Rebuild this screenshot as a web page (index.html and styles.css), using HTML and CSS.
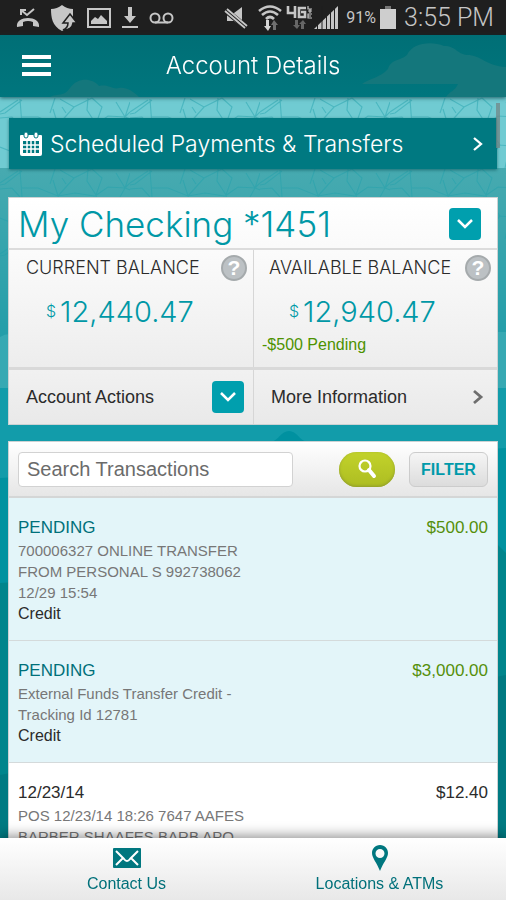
FILE: index.html
```html
<!DOCTYPE html>
<html lang="en">
<head>
<meta charset="utf-8">
<meta name="viewport" content="width=device-width, initial-scale=1">
<title>Account Details</title>
<link rel="stylesheet" href="styles.css">
</head>
<body>
<div class="app">
  <div class="status">
    <div class="status-group status-left">
      <svg width="24" height="20" viewBox="0 0 24 20"><path d="M1 19c-2-12 24-12 22 0l-6-1v-4q-5-2-10 0v4z" fill="#c6c6c6"/><path d="M5 7V2h5M5 2l6 5 7-6" fill="none" stroke="#c6c6c6" stroke-width="2"/></svg>
      <svg width="27" height="26" viewBox="0 0 27 26"><path d="M12 0q5 4 11 4v9l-4 10-7 3C2 21 1 12 1 4q6 0 11-4z" fill="#c6c6c6"/><path d="M20 9l7 9h-4q-1 7-10 7 5-2 5-7h-5z" fill="#c6c6c6" stroke="#1f1f1f" stroke-width="1.500"/></svg>
      <svg width="24" height="20" viewBox="0 0 24 20"><path d="M1 1h22v18H1z" fill="none" stroke="#c6c6c6" stroke-width="2"/><path d="M4 16v-3l4-4 3 2 3-4 4 4 2 2v3z" fill="#c6c6c6"/></svg>
      <svg width="18" height="22" viewBox="0 0 18 22"><path d="M7 0h4v9h4l-6 7-6-7h4z" fill="#c6c6c6"/><path d="M1 20h16" stroke="#c6c6c6" stroke-width="2"/></svg>
      <svg width="25" height="12" viewBox="0 0 25 12"><g fill="none" stroke="#c6c6c6" stroke-width="2"><circle cx="6" cy="6" r="4.500"/><circle cx="19" cy="6" r="4.500"/><path d="M6 10.500h13"/></g></svg>
    </div>
    <div class="status-group status-right">
      <svg class="mute" width="23" height="22" viewBox="0 0 23 22"><path d="M2 6h7l8-6v20l-8-6H2z" fill="#c6c6c6"/><path d="M-1 2l23 19" stroke="#1f1f1f" stroke-width="6"/><path d="M0 4l20 17M2 2l20 17" stroke="#c6c6c6" stroke-width="1.800"/></svg>
      <svg width="24" height="26" viewBox="0 0 24 26"><g fill="none" stroke="#c6c6c6" stroke-width="2.600"><path d="M1 6q11-9 22 0M4 10q8-7 16 0M8 14q4-4 8 0"/></g><path d="M8 15h3v6h2l-3 5-4-5h2z" fill="#d6d6d6"/><path d="M16 15l4 5h-2v5h-3v-5h-2z" fill="#707070"/></svg>
      <svg width="26" height="24" viewBox="0 0 26 24"><g fill="none" stroke="#c6c6c6" stroke-width="2.600"><path d="M2 0v7h8M9 0v12M20 2h-7v9h6V6h-4"/></g><path d="M22 0v3h4M22 5h4M24 3v4M26 8h-4v4h4M22 10h3" fill="none" stroke="#c6c6c6" stroke-width="1.200"/><path d="M9 14h3v5h2l-3 4-4-4h2zM18 23h-3v-5h-2l4-4 3 4h-2z" fill="#666"/></svg>
      <svg class="signal" width="24" height="23" viewBox="0 0 24 23"><path d="M0 23L24 0v23z" fill="#c6c6c6"/><path d="M3.500 0v23M8 0v23M12.500 0v23M16.500 0v23M20.500 0v23" stroke="#1f1f1f"/></svg>
      <span class="percent">91%</span>
      <svg width="16" height="23" viewBox="0 0 16 23"><path d="M5 0h6v3H5z" fill="#777"/><path d="M0 3h16v20H0z" fill="#cecece"/></svg>
      <span class="clock">3:55 PM</span>
    </div>
  </div>

  <header class="topbar">
    <svg class="clouds" viewBox="0 0 506 62" preserveAspectRatio="xMidYMax slice" aria-hidden="true"><path d="M50 62c8-4 14 0 20-9 8-11 22-10 29-2 10-2 14 4 20 2 7-1 14 3 20 9z"/><path d="M362 49c8-6 18-6 26-15 3-10 12-8 19-14 6-13 25-14 37-9 12 0 13 8 23 9 14 0 19 11 39 12v30h-60c4-6 9-6 12-13z"/></svg>
    <button class="menu" type="button" aria-label="Menu"><svg width="30" height="24" viewBox="0 0 30 24"><path d="M0 1h29v4H0zM0 9h29v4H0zM0 18h29v4H0z" fill="#fff"/></svg></button>
    <h1 class="title">Account Details</h1>
  </header>

  <main class="content">
    <svg class="scenery" viewBox="0 0 506 741" preserveAspectRatio="xMidYMin slice" aria-hidden="true">
      <defs>
        <pattern id="facets" width="130" height="71" patternUnits="userSpaceOnUse"><path d="M20 2l2 27M22 3L5 16l-5 1M22 20l16 0 20 8M0 21l12-1 8 9M58 28l-5-16M58 28L74 10 92 1M60 2l14 8M50 16l5-15M62 10l4 6M88 1l-1 12 9 14 6-17L92 1M58 28l17-3 20 3 13-9 17 1M125 20l-9-15M125 20l5-15M125 20l-5 9M125 20l5-5M0 15l18-12M125 20l5 2M22 29l-2 40M58 28l10 20-8 23M96 28l14 20-18 22M125 29l-10 42M0 50l20 8 48-10 42 0 20 2" fill="none" stroke="#1fa0ab" stroke-opacity=".45" stroke-width="1.200"/></pattern>
        <linearGradient id="sea" x1="0" y1="0" x2="0" y2="1"><stop offset="0" stop-color="#47aab0"/><stop offset="1" stop-color="#189aa7"/></linearGradient>
      </defs>
      <path d="M0 0h506v71H0z" fill="#70cbd2"/>
      <path d="M0 71h506v220H0z" fill="url(#sea)"/>
      <path d="M0 0h506v160H0z" fill="url(#facets)"/>
      <path d="M0 240q9-6 20 0v51H0zM486 235h20v60h-20z" fill="#36a9b3"/>
      <path d="M0 291h506v90H0z" fill="#129caa"/>
      <path d="M271 345c8-2 10-11 18-11s10 9 18 11z" fill="#0091a0"/>
      <path d="M0 381l506-30v390H0z" fill="#0092a0"/>
      <path d="M0 486l490-30 8-8 8 8v285H0z" fill="#00858c"/>
      <path d="M0 678l506-100v163H0z" fill="#007a82"/>
    </svg>
    <span class="thumb" aria-hidden="true"></span>

    <a class="banner" href="#scheduled">
      <svg width="24" height="26" viewBox="0 0 24 26"><path d="M2 4h20q1 0 1 1v18q0 2-2 2H3q-2 0-2-2V5q0-1 1-1z" fill="#fff"/><path d="M4 10h16v12H4z" fill="#007981"/><path d="M8 10v12M12 10v12M16 10v12M4 14h16M4 18h16" stroke="#fff" stroke-width="1.500"/><rect x="5" y="1" width="4" height="6" rx="2" fill="#fff" stroke="#007981"/><rect x="15" y="1" width="4" height="6" rx="2" fill="#fff" stroke="#007981"/></svg>
      <span class="banner-text">Scheduled Payments &amp; Transfers</span>
      <svg width="10" height="14" viewBox="0 0 10 14"><path d="M1 1l7 6-7 6" fill="none" stroke="#fff" stroke-width="2.300"/></svg>
    </a>

    <section class="card account">
      <div class="account-head">
        <h2 class="account-name">My Checking *1451</h2>
        <button class="drop" type="button" aria-label="Choose account"><svg width="16" height="10" viewBox="0 0 16 10"><path d="M1 1l7 7 7-7" fill="none" stroke="#fff" stroke-width="2.500"/></svg></button>
      </div>
      <div class="cells balances">
        <div class="cell">
          <div class="cell-head"><h3 class="label">CURRENT BALANCE</h3><button class="help" type="button" aria-label="About current balance">?</button></div>
          <p class="amount"><span class="currency">$</span>12,440.47</p>
        </div>
        <div class="cell">
          <div class="cell-head"><h3 class="label">AVAILABLE BALANCE</h3><button class="help" type="button" aria-label="About available balance">?</button></div>
          <p class="amount"><span class="currency">$</span>12,940.47</p>
          <p class="pending">-$500 Pending</p>
        </div>
      </div>
      <div class="cells actions">
        <button class="action" type="button"><span>Account Actions</span><span class="drop"><svg width="16" height="10" viewBox="0 0 16 10"><path d="M1 1l7 7 7-7" fill="none" stroke="#fff" stroke-width="2.500"/></svg></span></button>
        <a class="action more" href="#more"><span>More Information</span><svg width="12" height="16" viewBox="0 0 12 16"><path d="M2 2l7 6-7 6" fill="none" stroke="#6e6e6e" stroke-width="2.800"/></svg></a>
      </div>
    </section>

    <section class="card">
      <form class="search" role="search">
        <input class="field" type="text" placeholder="Search Transactions" aria-label="Search Transactions">
        <button class="go" type="button" aria-label="Search"><svg width="20" height="20" viewBox="0 0 20 20"><circle cx="8" cy="7" r="5.500" fill="none" stroke="#fff" stroke-width="2.200"/><path d="M12 11l5 6" stroke="#fff" stroke-width="4" stroke-linecap="round"/></svg></button>
        <button class="filter" type="button">FILTER</button>
      </form>
      <ul class="list">
        <li class="item is-pending">
          <div class="row"><span class="when">PENDING</span><span class="sum">$500.00</span></div>
          <p class="memo">700006327 ONLINE TRANSFER<br>FROM PERSONAL S 992738062<br>12/29 15:54</p>
          <p class="kind">Credit</p>
        </li>
        <li class="item is-pending">
          <div class="row"><span class="when">PENDING</span><span class="sum">$3,000.00</span></div>
          <p class="memo">External Funds Transfer Credit -<br>Tracking Id 12781</p>
          <p class="kind">Credit</p>
        </li>
        <li class="item">
          <div class="row"><span class="when">12/23/14</span><span class="sum">$12.40</span></div>
          <p class="memo">POS 12/23/14 18:26 7647 AAFES<br>BARBER SHAAFES BARB APO</p>
        </li>
      </ul>
    </section>
  </main>

  <nav class="tabs">
    <a class="tab" href="#contact"><svg width="28" height="26" viewBox="0 0 28 26"><rect y="3" width="28" height="20" rx="1" fill="#00777f"/><path d="M3 6l8 8q3 4 6 0l8-8M3 20l7-7M25 20l-7-7" fill="none" stroke="#fff" stroke-width="2"/></svg><span>Contact Us</span></a>
    <a class="tab" href="#locations"><svg width="18" height="26" viewBox="0 0 18 26"><path fill-rule="evenodd" d="M9 0c5 0 8 4 8 8 0 5-5 10-8 18C6 18 1 13 1 8c0-4 3-8 8-8zm0 4a4.500 4.500 0 100 9 4.500 4.500 0 000-9z" fill="#00777f"/></svg><span>Locations &amp; ATMs</span></a>
  </nav>
</div>
</body>
</html>
```
FILE: styles.css
```css
* { box-sizing: border-box; }
body {
  margin: 0;
  font: 16px/21px "Liberation Sans", Arial, sans-serif;
  color: #2b2b2b;
}
h1, h2, h3, p, ul { margin: 0; padding: 0; font-weight: 400; }
button { font: inherit; color: inherit; border: 0; padding: 0; background: none; cursor: pointer; }
a { color: inherit; text-decoration: none; }
svg { display: block; flex: none; overflow: visible; }

.app { display: flex; flex-direction: column; height: 100vh; overflow: hidden; }

.status {
  display: flex;
  justify-content: space-between;
  align-items: center;
  height: 35px;
  flex: none;
  padding: 0 12px 0 16px;
  background: #1f1f1f;
  color: #c6c6c6;
  font-family: Roboto, sans-serif;
  font-weight: 300;
}
.status-group { display: flex; align-items: center; }
.status-left { gap: 10px; }
.status-right { gap: 4px; }
.mute { margin-right: 6px; }
.signal { margin-left: -2px; }
.percent { font-size: 16px; font-weight: 400; margin-left: 4px; }
.clock { font-size: 25px; line-height: 35px; margin-left: 4px; }

.topbar {
  position: relative;
  z-index: 2;
  display: flex;
  align-items: center;
  justify-content: center;
  height: 62px;
  flex: none;
  background: linear-gradient(#006f76, #00767e);
  box-shadow: 0 1px 4px rgba(0, 50, 55, .7);
}
.clouds { position: absolute; inset: 0; width: 100%; height: 100%; fill: #14777c; overflow: hidden; }
.menu { position: absolute; left: 22px; top: 19px; }
.title { position: relative; color: #fff; font: 300 24px/28px Inter, sans-serif; }

.content {
  position: relative;
  flex: 1;
  min-height: 0;
  overflow-x: hidden;
  overflow-y: auto;
  scrollbar-width: none;
  padding: 21px 8px 0;
  background: #007a82;
}
.scenery { position: absolute; left: 0; top: 0; width: 100%; height: 100%; overflow: hidden; }
.thumb { position: absolute; right: 6px; top: 6px; width: 4px; height: 45px; background: rgba(115, 135, 135, .75); z-index: 1; }

.banner {
  position: relative;
  display: flex;
  align-items: center;
  gap: 7px;
  height: 51px;
  margin: 0 1px;
  padding: 0 14px 0 10px;
  background: #007981;
  color: #fff;
  font: 300 23px/28px Inter, sans-serif;
  box-shadow: 0 1px 3px rgba(0, 70, 75, .6);
}
.banner-text { flex: 1; }

.card { position: relative; border: 1px solid #ccd2d3; background: #fff; }
.account { margin: 28px 0 16px; }
.account-head {
  display: flex;
  justify-content: space-between;
  align-items: center;
  height: 52px;
  padding: 2px 16px 0 9px;
  background: linear-gradient(#fff, #fafafa);
  border-bottom: 2px solid #dcdcdc;
}
.account-name { color: #0098a6; font: 300 35px/40px Inter, sans-serif; }
.drop {
  display: flex;
  align-items: center;
  justify-content: center;
  width: 32px;
  height: 32px;
  border-radius: 4px;
  background: #009fae;
}
.cells { display: grid; grid-template-columns: 1fr 1fr; }
.balances { background: linear-gradient(#fbfbfb, #ededed); border-bottom: 3px solid #d9d9d9; }
.cell { height: 117px; padding: 5px 6px 0 17px; }
.cell + .cell, .more { border-left: 1px solid #d6d6d6; }
.cell-head { display: flex; align-items: center; justify-content: space-between; height: 26px; }
.cell + .cell { padding-left: 15px; }
.label { font: 300 18px/24px Inter, sans-serif; white-space: nowrap; }
.help {
  flex: none;
  width: 26px;
  height: 26px;
  border: 2px solid #a5aaac;
  border-radius: 50%;
  background: #bcc1c4;
  color: #fff;
  font-size: 21px;
  line-height: 22px;
  font-weight: 700;
}
.amount { padding-left: 20px; margin-top: 13px; color: #0098a6; font: 300 29px/34px Inter, sans-serif; }
.currency { font-size: 16px; vertical-align: 5px; margin-right: 4px; }
.pending { color: #4d9200; line-height: 20px; margin: 6px 0 0 -7px; }
.actions { background: linear-gradient(#f1f1f1, #e9e9e9); }
.action {
  display: flex;
  align-items: center;
  justify-content: space-between;
  height: 54px;
  padding: 0 9px 0 17px;
  font-size: 18px;
  text-align: left;
}
.more { padding-right: 13px; }

.search {
  display: flex;
  align-items: center;
  height: 56px;
  padding: 0 9px;
  background: linear-gradient(#fff, #e6e6e6);
  border-bottom: 2px solid #d4d6d6;
}
.field {
  flex: 0 1 275px;
  min-width: 0;
  height: 35px;
  padding: 0 8px;
  border: 1px solid #d2d2d2;
  border-radius: 4px;
  background: #fff;
  font: 20px/24px "Liberation Sans", Arial, sans-serif;
}
.field::placeholder { color: #6b6b6b; opacity: 1; }
.go {
  display: flex;
  align-items: center;
  justify-content: center;
  width: 56px;
  height: 35px;
  margin-left: auto;
  border-radius: 18px;
  background: linear-gradient(#c2d22b, #adbd22);
  box-shadow: inset 0 -1px 3px #8e9b2c;
}
.filter {
  width: 79px;
  height: 35px;
  margin-left: 14px;
  border: 1px solid #ccc;
  border-radius: 6px;
  background: linear-gradient(#f5f5f5, #dcdcdc);
  color: #009aaa;
  font-size: 16px;
  font-weight: 700;
}

.list { list-style: none; }
.item { padding: 18px 9px 16px; border-bottom: 1px solid #d4dadb; }
.is-pending { background: #e3f5f9; }
.row { display: flex; justify-content: space-between; font-size: 17px; line-height: 24px; }
.is-pending .when { color: #00707a; }
.is-pending .sum { color: #558f0a; }
.memo { color: #777; font-size: 15px; }

.tabs {
  position: relative;
  z-index: 2;
  display: grid;
  grid-template-columns: 1fr 1fr;
  flex: none;
  height: 62px;
  background: linear-gradient(#fff, #e8e8e8);
  box-shadow: 0 -2px 12px rgba(0, 0, 0, .45);
  color: #00707a;
}
.tab { display: flex; flex-direction: column; align-items: center; padding-top: 7px; gap: 2px; }
```
